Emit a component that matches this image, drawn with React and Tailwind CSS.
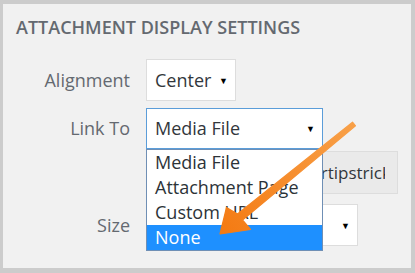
import React from 'react';

const Caret = () => (
  <span className="text-[9px] leading-none text-black">▼</span>
);

const App = () => {
  return (
    <div className="w-[415px] h-[273px] bg-[#cccccc] pt-[4px] pl-[3px] pr-[4px] pb-[5px] font-['Open_Sans',sans-serif]">
      <div className="relative w-full h-full bg-[#f1f1f1] overflow-hidden">
        <h2 className="pt-[11px] pl-[13px] text-[18px] leading-[24px] font-semibold uppercase text-[#646970]">
          Attachment Display Settings
        </h2>

        <div className="mt-[20px] grid grid-cols-[127px_1fr] gap-x-[16px] text-[18px]">
          {/* Alignment */}
          <div className="h-[42px] flex items-center justify-end text-[#646970]">Alignment</div>
          <div className="h-[42px]">
            <div className="w-[90px] h-full bg-white border border-[#dddddd] flex items-center justify-between pl-[8px] pr-[7px] text-[#32373c]">
              <span>Center</span>
              <Caret />
            </div>
          </div>

          {/* Link To */}
          <div className="mt-[7px] h-[41px] flex items-center justify-end text-[#646970]">Link To</div>
          <div className="mt-[7px] h-[41px]">
            <div className="w-[177px] h-full bg-white border border-[#5b9dd9] flex items-center justify-between pl-[8px] pr-[7px] text-[#32373c]">
              <span>Media File</span>
              <Caret />
            </div>
          </div>

          {/* URL */}
          <div className="mt-[2px] h-[43px]" />
          <div className="mt-[2px] h-[43px]">
            <div className="w-[252px] h-full bg-[#eaeaea] border border-[#dddddd] flex items-center pr-[12px]">
              <div className="flex-1 overflow-hidden flex justify-end whitespace-nowrap text-[#32373c] text-[17px]">
                <span className="relative left-[14px]">http://www.wpsmartipstricks</span>
              </div>
            </div>
          </div>

          {/* Size */}
          <div className="mt-[10px] h-[42px] flex items-center justify-end text-[#646970]">Size</div>
          <div className="mt-[10px] h-[42px]">
            <div className="w-[212px] h-full bg-white border border-[#dddddd] flex items-center justify-end pr-[7px] text-[#32373c]">
              <Caret />
            </div>
          </div>
        </div>

        {/* open dropdown list */}
        <ul className="absolute left-[143px] top-[145px] w-[177px] bg-white border border-[#6f8fb5] text-[18px] leading-[25px] text-[#2c3338]">
          <li className="pl-[8px]">Media File</li>
          <li className="pl-[8px]">Attachment Page</li>
          <li className="pl-[8px]">Custom URL</li>
          <li className="pl-[8px] bg-[#1e90ff] text-white">None</li>
        </ul>

        {/* orange callout arrow */}
        <svg className="absolute inset-0 pointer-events-none" width="408" height="264" viewBox="3 4 408 264">
          <defs>
            <linearGradient id="arr" x1="354" y1="124" x2="220" y2="234" gradientUnits="userSpaceOnUse">
              <stop offset="0" stopColor="#f8a048" />
              <stop offset="1" stopColor="#f47a12" />
            </linearGradient>
          </defs>
          <path
            d="M352.5 122.2 L237.5 214 L226.5 207.5 L220 234 L250.5 229.5 L242.5 220 L355.5 125.8 Z"
            fill="url(#arr)"
            stroke="url(#arr)"
            strokeWidth="1.2"
            strokeLinejoin="round"
          />
        </svg>
      </div>
    </div>
  );
};

export default App;
